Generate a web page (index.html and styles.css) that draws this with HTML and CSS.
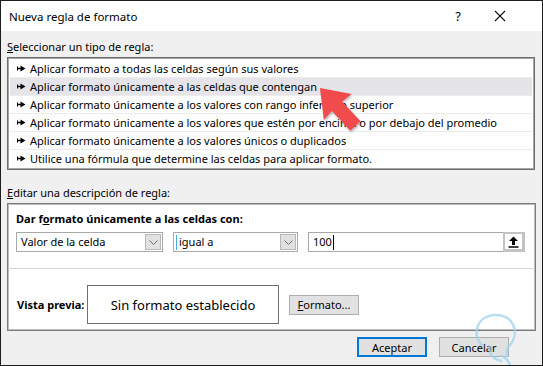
FILE: index.html
```html
<!DOCTYPE html>
<html lang="es">
<head>
    <meta charset="UTF-8">
    <title>Nueva regla de formato</title>
    <link rel="stylesheet" href="styles.css">
</head>
<body>
<div class="window">
    <div class="titlebar">
        <span class="title">Nueva regla de formato</span>
        <span class="help">?</span>
        <svg class="close" width="12" height="12" viewBox="0 0 12 12">
            <path d="M1 1 L11 11 M11 1 L1 11" stroke="#111" stroke-width="1.1" fill="none"/>
        </svg>
    </div>

    <div class="content">
        <div class="group-label"><u>S</u>eleccionar un tipo de regla:</div>
        <ul class="rule-list">
            <li><svg class="bullet" width="9" height="7" viewBox="0 0 9 7"><path d="M0 1.5h1v4H0z M1 2.8h4v1.4H1z M3.5 0.5 L8.5 3.5 L3.5 6.5z" fill="#000"/></svg>Aplicar formato a todas las celdas según sus valores</li>
            <li class="selected"><svg class="bullet" width="9" height="7" viewBox="0 0 9 7"><path d="M0 1.5h1v4H0z M1 2.8h4v1.4H1z M3.5 0.5 L8.5 3.5 L3.5 6.5z" fill="#000"/></svg>Aplicar formato únicamente a las celdas que contengan</li>
            <li><svg class="bullet" width="9" height="7" viewBox="0 0 9 7"><path d="M0 1.5h1v4H0z M1 2.8h4v1.4H1z M3.5 0.5 L8.5 3.5 L3.5 6.5z" fill="#000"/></svg>Aplicar formato únicamente a los valores con rango inferior o superior</li>
            <li><svg class="bullet" width="9" height="7" viewBox="0 0 9 7"><path d="M0 1.5h1v4H0z M1 2.8h4v1.4H1z M3.5 0.5 L8.5 3.5 L3.5 6.5z" fill="#000"/></svg>Aplicar formato únicamente a los valores que estén por encima o por debajo del promedio</li>
            <li><svg class="bullet" width="9" height="7" viewBox="0 0 9 7"><path d="M0 1.5h1v4H0z M1 2.8h4v1.4H1z M3.5 0.5 L8.5 3.5 L3.5 6.5z" fill="#000"/></svg>Aplicar formato únicamente a los valores únicos o duplicados</li>
            <li><svg class="bullet" width="9" height="7" viewBox="0 0 9 7"><path d="M0 1.5h1v4H0z M1 2.8h4v1.4H1z M3.5 0.5 L8.5 3.5 L3.5 6.5z" fill="#000"/></svg>Utilice una fórmula que determine las celdas para aplicar formato.</li>
        </ul>

        <div class="group-label second"><u>E</u>ditar una descripción de regla:</div>
        <div class="desc-box">
            <div class="desc-top">
                <div class="desc-title">Dar f<u>o</u>rmato únicamente a las celdas con:</div>
                <div class="controls">
                    <div class="combo combo-wide">
                        <span class="combo-text">Valor de la celda</span>
                        <span class="combo-btn"><svg width="9" height="5" viewBox="0 0 9 5"><path d="M0.5 0.5 L4.5 4.5 L8.5 0.5" stroke="#6d6d6d" fill="none"/></svg></span>
                    </div>
                    <div class="combo combo-mid">
                        <span class="combo-text"><span class="focus-line"></span>igual a</span>
                        <span class="combo-btn"><svg width="9" height="5" viewBox="0 0 9 5"><path d="M0.5 0.5 L4.5 4.5 L8.5 0.5" stroke="#6d6d6d" fill="none"/></svg></span>
                    </div>
                    <div class="value-input">
                        <span class="value-text">100<span class="caret"></span></span>
                        <span class="ref-btn"><svg width="11" height="12" viewBox="0 0 11 12"><path d="M5.5 0.5 L10 5 L7 5 L7 9 L4 9 L4 5 L1 5z M0.5 10.3h10v1.4h-10z" fill="#000"/></svg></span>
                    </div>
                </div>
            </div>
            <div class="desc-bottom">
                <span class="preview-label">Vista previa:</span>
                <div class="preview">Sin formato establecido</div>
                <button class="btn"><u>F</u>ormato...</button>
            </div>
        </div>

        <div class="footer">
            <button class="btn btn-default">Aceptar</button>
            <button class="btn">Cancelar</button>
        </div>
    </div>

    <!-- marca roja encima de la lista -->
    <svg class="pointer" width="543" height="366" viewBox="0 0 543 366">
        <g transform="translate(320 88) rotate(47)">
            <path d="M0 0 L26 -19 L25 -7 L52 -7 L52 7 L25 7 L26 19 Z" fill="#f24b4b"/>
        </g>
    </svg>

    <svg class="watermark" width="70" height="60" viewBox="0 0 70 60">
        <path d="M20 38 C8 30 10 8 30 6 C50 5 56 24 46 36 C42 40 42 44 43 48" stroke="#9fd3ee" stroke-width="2.5" fill="none" opacity="0.75"/>
        <path d="M26 36 C24 44 28 50 38 52 M36 46 C40 48 44 50 46 56" stroke="#9fd3ee" stroke-width="2.5" fill="none" opacity="0.75"/>
    </svg>
</div>
</body>
</html>
```

FILE: styles.css
```css
/* ventana */
body {
    margin: 0;
    font-family: 'Noto Sans', 'Open Sans', sans-serif;
    font-size: 11px;
    color: #000;
}

.window {
    position: relative;
    width: 543px;
    height: 366px;
    box-sizing: border-box;
    border: 1px solid #1e1e1e;
    background: #f0f0f0;
    overflow: hidden;
}

.titlebar {
    height: 30px;
    background: #fff;
    display: flex;
    align-items: center;
    padding-left: 8px;
    font-size: 11.5px;
}

.title {
    flex: 1;
}

.help {
    font-size: 13px;
    margin-right: 33px;
}

.close {
    margin-right: 36px;
}

.content {
    padding: 0 6px 0 6px;
}

.group-label {
    padding-top: 8px;
    line-height: 16px;
    height: 16px;
    margin-bottom: 2px;
}

.group-label.second {
    padding-top: 15px;
}

/* lista de tipos */
.rule-list {
    list-style: none;
    margin: 0;
    width: 528px;
    box-sizing: border-box;
    background: #fff;
    border: 1px solid #6e6e6e;
    box-shadow: inset 0 0 0 1px #a6a6a6;
    padding: 2px;
}

.rule-list li {
    height: 17px;
    line-height: 17px;
    border-bottom: 1px solid #ececec;
    padding-left: 7px;
    display: flex;
    align-items: center;
    white-space: nowrap;
}

.rule-list li:last-child {
    border-bottom: none;
}

.rule-list li.selected {
    background: #e4e4e9;
}

.bullet {
    margin-right: 4px;
    flex: none;
}

/* descripcion */
.desc-box {
    width: 529px;
    box-sizing: border-box;
    background: #fff;
    border: 1px solid #7c7c7c;
    box-shadow: inset 0 0 0 1px #bdbdbd;
}

.desc-top {
    padding: 7px 8px 0 8px;
    height: 57px;
    border-bottom: 1px solid #d6d6d6;
}

.desc-title {
    font-weight: bold;
    line-height: 16px;
}

.controls {
    display: flex;
    gap: 10px;
    margin-top: 5px;
}

.combo, .value-input {
    height: 20px;
    box-sizing: border-box;
    border: 1px solid #a9a9a9;
    display: flex;
    align-items: center;
    background: #fff;
}

.combo-wide {
    width: 147px;
}

.combo-mid {
    width: 125px;
}

.value-input {
    width: 217px;
}

.combo-text, .value-text {
    flex: 1;
    padding-left: 4px;
    display: flex;
    align-items: center;
    line-height: 16px;
}

.focus-line {
    width: 1px;
    height: 15px;
    background: #4aa8e0;
    margin-right: 2px;
    margin-left: -2px;
}

.caret {
    width: 1px;
    height: 15px;
    background: #000;
    margin-left: 1px;
}

.combo-btn {
    width: 16px;
    height: 16px;
    box-sizing: border-box;
    margin-right: 1px;
    background: #e1e1e1;
    border: 1px solid #b9b9b9;
    display: flex;
    align-items: center;
    justify-content: center;
}

.ref-btn {
    width: 22px;
    height: 20px;
    margin-right: -1px;
    box-sizing: border-box;
    background: #fff;
    border: 2px solid #c3c3c3;
    border-right-width: 3px;
    border-bottom-width: 3px;
    display: flex;
    align-items: center;
    justify-content: center;
}

.desc-bottom {
    display: flex;
    align-items: center;
    padding: 16px 8px 6px 9px;
}

.preview-label {
    font-weight: bold;
    width: 70px;
    white-space: nowrap;
}

.preview {
    width: 192px;
    height: 39px;
    box-sizing: border-box;
    border: 1px solid #707070;
    display: flex;
    align-items: center;
    justify-content: center;
    font-size: 13px;
}

.btn {
    font-family: inherit;
    font-size: 11px;
    width: 70px;
    height: 20px;
    padding: 0;
    box-sizing: border-box;
    background: #e1e1e1;
    border: 1px solid #adadad;
    color: #000;
}

.desc-bottom .btn {
    margin-left: 10px;
}

.footer {
    display: flex;
    justify-content: flex-end;
    gap: 12px;
    margin-top: 6px;
    padding-right: 27px;
}

.btn-default {
    border: 2px solid #0078d7;
}

.pointer {
    position: absolute;
    left: -1px;
    top: -1px;
    pointer-events: none;
    filter: drop-shadow(1px 2px 1px rgba(0, 0, 0, 0.25));
}

.watermark {
    position: absolute;
    right: 8px;
    bottom: -4px;
    pointer-events: none;
}
```
